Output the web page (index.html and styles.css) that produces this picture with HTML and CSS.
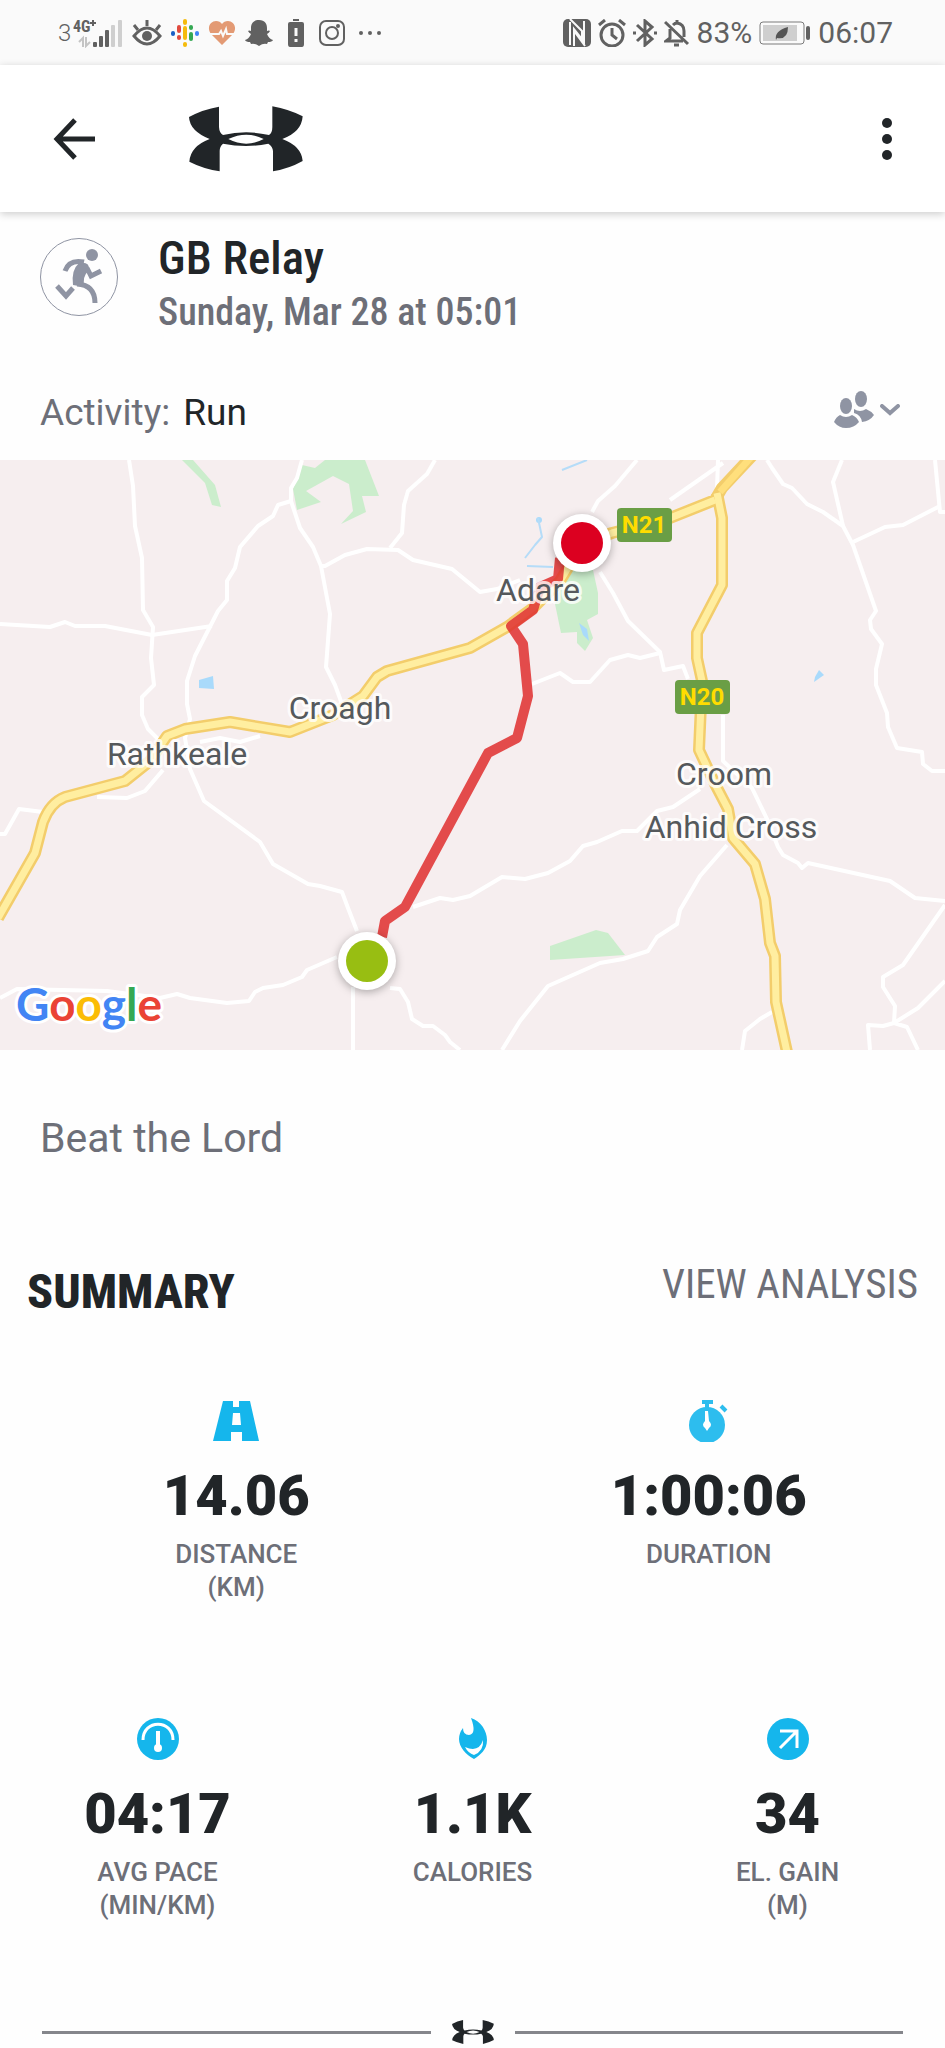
FILE: index.html
```
<!DOCTYPE html>
<html lang="en">
  <head>
    <meta charset="UTF-8" />
    <meta name="viewport" content="width=device-width, initial-scale=1" />
    <title>GB Relay</title>
    <link rel="stylesheet" href="styles.css">
  </head>
  <body>
    <!-- Shared logo shape -->
    <svg class="defs" width="0" height="0" aria-hidden="true">
      <symbol id="logo" viewBox="568 318 342 196">
        <path fill-rule="evenodd" d="M568 350Q610 327 658 319V380Q659 398 670 404Q740 388 808 404Q818 398 818 380V318Q868 327 909 348Q906 395 848 416Q906 438 909 482Q868 505 820 513V452Q819 438 806 430Q740 444 670 430Q660 438 660 452V513Q610 505 569 484Q572 438 630 416Q570 392 568 350ZM686 416Q740 390 792 416Q740 444 686 416Z" />
      </symbol>
    </svg>

    <!-- Phone status bar -->
    <div class="status-bar">
      <div class="status-left">
        <span class="sim">3</span>
        <svg width="50" height="30" viewBox="0 0 50 30">
          <text class="network" x="0" y="14">4G</text>
          <path d="M17 5h6M20 2v6" stroke="#616161" stroke-width="2" />
          <path d="M6 24l4-4v9M13 19v9l4-4" fill="none" stroke="#c4c4c4" stroke-width="2" />
          <g fill="#616161">
            <rect x="20" y="24" width="4" height="5" rx="1" />
            <rect x="26" y="18" width="4" height="11" rx="1" />
            <rect x="32" y="12" width="4" height="17" rx="1" />
          </g>
          <g fill="#cfcfcf">
            <rect x="38" y="7" width="4" height="22" rx="1" />
            <rect x="45" y="2" width="4" height="27" rx="1" />
          </g>
        </svg>
        <svg width="30" height="28" viewBox="0 0 30 28">
          <path d="M2 17Q15 1 28 17Q15 33 2 17Z" fill="none" stroke="#616161" stroke-width="3" />
          <circle cx="15" cy="17" r="5" fill="#616161" />
          <path d="M2 6l4 5M15 1v6M28 6l-4 5" stroke="#616161" stroke-width="3" />
        </svg>
        <svg width="28" height="28" viewBox="0 0 28 28" stroke-width="4" stroke-linecap="round">
          <path d="M2 14v1" stroke="#1a5fc4" />
          <path d="M8 8v4M8 18v1" stroke="#e04a3f" />
          <path d="M14 2v2M14 9v10M14 25v1" stroke="#f5bb0c" />
          <path d="M20 8v1M20 15v5" stroke="#34a853" />
          <path d="M26 14v1" stroke="#4285f4" />
        </svg>
        <svg width="28" height="26" viewBox="0 0 28 26">
          <path d="M14 25L3 14C-2 7 3 1 8 1q4 0 6 3 2-3 6-3c5 0 10 6 5 13Z" fill="#e39a74" />
          <path d="M1 14h10l2-3 2 5 3-7 1 5h8" fill="none" stroke="#fafafa" stroke-width="2" />
        </svg>
        <svg width="28" height="26" viewBox="0 0 28 26">
          <path d="M14 0c6 0 8 4 8 8v3q2-1 3 0-1 2-3 3 2 5 6 6-1 2-5 2l-1 2q-4-1-8 2-4-3-8-2l-1-2q-4 0-5-2 4-1 6-6-2-1-3-3 1-1 3 0V8c0-4 2-8 8-8Z" fill="#616161" />
        </svg>
        <svg class="cell" width="16" height="28" viewBox="0 0 16 28">
          <path d="M5 0h6v2H5ZM2 3h12q2 0 2 2v20q0 3-2 3H2q-2 0-2-3V5q0-2 2-2Z" fill="#616161" />
          <path d="M8 9v8M8 20v3" stroke="#fafafa" stroke-width="3" />
        </svg>
        <svg width="26" height="26" viewBox="0 0 26 26" fill="none" stroke="#616161" stroke-width="2">
          <rect x="1" y="1" width="24" height="24" rx="6" />
          <circle cx="13" cy="13" r="6" />
          <circle cx="19" cy="6" r="1" />
        </svg>
        <svg class="more" width="24" height="6" viewBox="0 0 24 6" fill="#616161">
          <circle cx="3" cy="3" r="2" /><circle cx="12" cy="3" r="2" /><circle cx="21" cy="3" r="2" />
        </svg>
      </div>
      <div class="status-right">
        <svg width="28" height="28" viewBox="0 0 28 28">
          <rect width="28" height="28" rx="5" fill="#616161" />
          <path d="M7 3v23M21 2v23" stroke="#fafafa" stroke-width="2" />
          <path d="M7 0L19 12V20L11 10V27M11 12L22 27" fill="none" stroke="#fafafa" stroke-width="2" />
        </svg>
        <svg width="28" height="28" viewBox="0 0 28 28" fill="none" stroke="#616161" stroke-width="3">
          <circle cx="14" cy="16" r="11" />
          <path d="M14 9v7l5 4M1 6l6-5M27 6l-6-5" />
        </svg>
        <svg width="24" height="28" viewBox="0 0 24 28" fill="none" stroke="#616161" stroke-width="3">
          <path d="M4 6l15 14-7 6V2l7 6L4 22M0 14h3M21 14h3" />
        </svg>
        <svg width="26" height="28" viewBox="0 0 26 28" fill="none" stroke="#616161" stroke-width="3">
          <path d="M1 3l23 22M6 10v9l-4 3h17M9 6q2-2 4-2 7 1 7 8v6M13 1v3" />
          <path d="M10 26h5" />
        </svg>
        <span class="clock">83%</span>
        <svg width="52" height="24" viewBox="0 0 52 24">
          <rect x="1" y="1" width="44" height="22" rx="3" fill="none" stroke="#7a7a7a" />
          <rect x="4" y="4" width="34" height="16" fill="#cfcfcf" />
          <path d="M17 19q-2-9 12-13 0 13-11 11Z" fill="#555" />
          <rect x="47" y="5" width="4" height="14" rx="2" fill="#616161" />
        </svg>
        <span class="clock">06:07</span>
      </div>
    </div>

    <header class="app-bar">
      <button class="icon-btn" aria-label="Back">
        <svg width="42" height="42" viewBox="0 0 42 42" fill="none" stroke="#212528" stroke-width="5">
          <path d="M42 21H4M22 2L4 21l18 19" />
        </svg>
      </button>
      <svg class="brand" width="114" height="66" role="img" aria-label="Under Armour"><use href="#logo" /></svg>
      <button class="icon-btn menu-btn" aria-label="More options">
        <svg width="12" height="44" viewBox="0 0 12 44" fill="#212528">
          <circle cx="6" cy="6" r="5" /><circle cx="6" cy="22" r="5" /><circle cx="6" cy="38" r="5" />
        </svg>
      </button>
    </header>

    <main>
      <section class="workout">
        <div class="avatar">
          <svg width="48" height="56" viewBox="0 0 48 56" fill="none" stroke="#8f94a3" stroke-width="5">
            <circle cx="37" cy="6" r="6" fill="#8f94a3" stroke="none" />
            <path d="M18 36Q16 21 24 14q11-2 10 7-8 8-4 17Z" fill="#8f94a3" stroke="none" />
            <path d="M29 13Q14 10 10 22M32 19l4 8 10-5M22 35q18 1 18 19" />
            <path d="M2 37l9 10 7-8" />
          </svg>
        </div>
        <div>
          <h1>GB Relay</h1>
          <p class="date">Sunday, Mar 28 at 05:01</p>
        </div>
      </section>

      <div class="activity">
        <p>Activity: <span>Run</span></p>
        <button class="icon-btn privacy" aria-label="Who can see this">
          <svg width="40" height="38" viewBox="0 0 40 38" fill="#8f94a3">
            <ellipse cx="27" cy="8" rx="6" ry="8" />
            <path d="M20 18q6 4 12 0 5 2 8 6-4 6-12 7-1-7-8-9Z" />
            <ellipse cx="12" cy="15" rx="6" ry="8" />
            <path d="M6 24q6 4 12 0 5 2 7 7-5 6-13 6-7 0-12-6 2-5 6-7Z" />
          </svg>
          <svg width="20" height="12" viewBox="0 0 20 12" fill="none" stroke="#8f94a3" stroke-width="4" stroke-linecap="round">
            <path d="M2 2l8 7 8-7" />
          </svg>
        </button>
      </div>

      <svg class="map" viewBox="0 0 945 590" role="img" aria-label="Route map">
        <rect width="945" height="590" fill="#f6eeef" />
        <!-- parks -->
        <g fill="#cbedcc">
          <path d="M182 0H193L215 25 221 47 212 45 205 23Z" />
          <path d="M302 5L315 8 325 0H365L379 36H362L366 52 341 64 353 51 349 24 333 16 306 31 321 42 297 50 293 29Z" />
          <path d="M567 110H593L598 133V154L587 160 593 178 585 191 577 183V172L561 173 555 144Z" />
          <path d="M550 486L596 470 608 473 625 495 550 500Z" />
        </g>
        <!-- water -->
        <g fill="#a9dafb">
          <path d="M199 220L213 216 214 229 199 228Z" />
          <path d="M815 217L819 210 824 215 814 222Z" />
          <path d="M579 163L587 169 589 181 583 175Z" />
          <circle cx="539" cy="60" r="3" />
        </g>
        <path class="stream" d="M562 10L587 0M538 58L542 77 535 85 525 98M527 106L553 107" />
        <!-- small roads -->
        <g class="road">
          <path d="M129 0L133 26 135 66 142 98 143 150 153 167 151 198 154 225 142 237V255L148 269 158 279" />
          <path d="M0 164L50 167 65 162 75 166H105L152 175 212 166" />
          <path d="M302 0L297 18 291 28V41L278 45 273 56 258 66 240 87 235 108 227 121V140L218 151 195 196 187 221V244L190 259 185 278 190 309 204 341 260 382 273 404 308 424 320 426 342 432 348 448 357 471" />
          <path d="M291 41L300 68 313 87 321 106 330 154 326 207 335 225 342 244" />
          <path d="M321 106H325L345 95 367 89 398 90 413 100 452 109 480 132 497 129 520 120" />
          <path d="M435 0L427 14 408 31 404 45 402 73 390 88" />
          <path d="M0 374H5L19 349 43 352M97 337L127 338 145 331 163 310M200 282L220 278 240 282 260 276" />
          <path d="M0 538L17 529 107 531 160 538 177 534 190 538 227 543 249 541 255 532 263 528 283 525 302 517 307 510 337 497" />
          <path d="M353 527V590M390 528L400 529 408 542 412 559 423 566H433L445 575 450 582 460 590" />
          <path d="M413 447L440 438 453 440 470 436 502 417 525 419 548 413 570 401 583 386 597 382 622 371H637L657 351 673 347 700 329" />
          <path d="M637 0L615 26 598 41 592 52M723 3L670 40M718 0L717 29" />
          <path d="M600 112L613 133 628 161 660 192 664 210 683 206 688 219" />
          <path d="M532 224L560 213 573 222H590L610 200 628 195 640 198 660 193" />
          <path d="M723 255V301L752 328 767 359 778 387 783 395 798 403 802 408 808 403 890 421 915 438 945 441" />
          <path d="M727 385L700 416 680 450 677 464 657 477 648 491 623 499 600 503 548 526 520 561 502 590" />
          <path d="M767 0L772 8 783 24 792 28 807 44 823 52 843 66 853 85 876 151 870 160 871 169 882 184 876 209V225L887 253 888 267 897 288 922 292 923 304 932 311H945" />
          <path d="M842 0L833 22 843 66M853 82L885 67 903 65 940 46M935 0L940 52H945" />
          <path d="M945 445L903 505 883 517V527L895 546 894 563 883 566 868 565 870 590M894 563L907 567 918 590M894 563L918 548 945 521" />
          <path d="M772 552L760 559 745 571 742 590" />
        </g>
        <!-- national roads: casing, then fill -->
        <g class="casing">
          <path d="M-2 458L35 393 43 362Q50 343 65 337L125 321 150 301 167 276 185 269 230 262 290 272 333 255 363 236 377 217 387 211 470 188 507 167 533 148 560 121 583 83 612 73 670 58 715 40 722 28 752 -4" />
          <path d="M717 33L722 58V125L697 173V198L702 221 699 290 715 324 728 349 733 378 755 404 765 439 770 483 775 496 776 542 787 592" />
        </g>
        <g class="main-road">
          <path d="M-2 458L35 393 43 362Q50 343 65 337L125 321 150 301 167 276 185 269 230 262 290 272 333 255 363 236 377 217 387 211 470 188 507 167 533 148 560 121 583 83 612 73 670 58 715 40" />
          <path d="M717 33L722 58V125L697 173V198L702 221 699 290 715 324 728 349 733 378 755 404 765 439 770 483 775 496 776 542 787 592" />
          <path class="trunk" d="M720 32L752 -4" />
        </g>
        <path class="route" d="M382 477L385 461 405 447 488 293 517 278 528 236 523 184 511 166 533 150 540 127 558 119 560 98" />
        <!-- start and finish -->
        <g class="marker">
          <circle cx="367" cy="501" r="29" />
          <circle cx="582" cy="83" r="29" />
        </g>
        <circle cx="367" cy="501" r="21" fill="#98be12" />
        <circle cx="582" cy="83" r="21" fill="#dc0020" />
        <g class="badge">
          <rect x="617" y="48" width="55" height="34" rx="4" />
          <rect x="675" y="220" width="55" height="34" rx="4" />
          <text x="644" y="73">N21</text>
          <text x="702" y="245">N20</text>
        </g>
        <g class="town">
          <text x="538" y="141">Adare</text>
          <text x="340" y="259">Croagh</text>
          <text x="177" y="305">Rathkeale</text>
          <text x="724" y="325">Croom</text>
          <text x="731" y="378">Anhid Cross</text>
        </g>
        <text class="google" x="16" y="561"><tspan fill="#4285f4">G</tspan><tspan fill="#ea4335">o</tspan><tspan fill="#fbbc05">o</tspan><tspan fill="#4285f4">g</tspan><tspan fill="#34a853">l</tspan><tspan fill="#ea4335">e</tspan></text>
      </svg>

      <p class="note">Beat the Lord</p>

      <div class="summary-head">
        <h2>SUMMARY</h2>
        <a href="#analysis">VIEW ANALYSIS</a>
      </div>

      <div class="stats two">
        <div class="stat">
          <svg width="46" height="42" viewBox="0 0 46 42">
            <path fill="#15b6ec" fill-rule="evenodd" d="M10 1H20V7H26V1H37L46 41H29V32H18V41H0ZM20 13L19 25H28L27 13Z" />
          </svg>
          <p class="value">14.06</p>
          <p class="label">DISTANCE<br>(KM)</p>
        </div>
        <div class="stat">
          <svg width="42" height="42" viewBox="0 0 42 42">
            <circle cx="19" cy="25" r="18" fill="#2dbdee" />
            <path d="M14 2h11M19 2v7M33 6l5 5" stroke="#2dbdee" stroke-width="4" />
            <path d="M17 11h3l1 10q4 4 0 7l-2 3-2-3q-4-3 0-7Z" fill="#fff" />
          </svg>
          <p class="value">1:00:06</p>
          <p class="label">DURATION</p>
        </div>
      </div>

      <div class="stats three">
        <div class="stat">
          <svg width="42" height="42" viewBox="0 0 42 42">
            <circle cx="21" cy="21" r="21" fill="#15b6ec" />
            <path d="M6 22C6 1 36 1 36 22" fill="none" stroke="#fff" stroke-width="3" />
            <path d="M21 13v16" stroke="#fff" stroke-width="4" />
            <circle cx="21" cy="30" r="4" fill="#fff" />
          </svg>
          <p class="value">04:17</p>
          <p class="label">AVG PACE<br>(MIN/KM)</p>
        </div>
        <div class="stat">
          <svg width="28" height="42" viewBox="0 0 28 42">
            <path d="M12 0C22 3 28 13 28 22 28 32 21 37 15 41 7 37 0 29 0 21Q0 15 4 10 4 17 10 17 18 16 12 0Z" fill="#15b6ec" />
            <path d="M6 29Q20 35 24 22 25 33 15 37 9 35 6 29Z" fill="#fff" />
          </svg>
          <p class="value">1.1K</p>
          <p class="label">CALORIES</p>
        </div>
        <div class="stat">
          <svg width="42" height="42" viewBox="0 0 42 42">
            <circle cx="21" cy="21" r="21" fill="#15b6ec" />
            <path d="M13 30L30 13M13 13H30V30" fill="none" stroke="#fff" stroke-width="3" />
          </svg>
          <p class="value">34</p>
          <p class="label">EL. GAIN<br>(M)</p>
        </div>
      </div>

      <div class="divider">
        <svg width="42" height="24" aria-hidden="true"><use href="#logo" /></svg>
      </div>
    </main>
  </body>
</html>
```
FILE: styles.css
```
* {
  margin: 0;
  padding: 0;
  box-sizing: border-box;
}
body {
  background: #fefefe;
  color: #212528;
  font-family: Roboto, "Liberation Sans", sans-serif;
}
svg {
  display: block;
  flex-shrink: 0;
}
.defs {
  position: absolute;
}

/* Status bar */
.status-bar {
  display: flex;
  justify-content: space-between;
  align-items: center;
  height: 65px;
  padding: 0 52px 0 58px;
  background: #fafafa;
  color: #616161;
}
.status-left,
.status-right {
  display: flex;
  align-items: center;
  gap: 9px;
}
.status-right {
  gap: 7px;
}
.sim {
  font-size: 24px;
  font-weight: 300;
  margin-right: -7px;
}
.network {
  font-size: 16px;
  font-weight: 700;
  font-family: "Roboto Condensed", "Liberation Sans Narrow", sans-serif;
  fill: #616161;
}
.cell {
  margin: 0 6px;
}
.more {
  margin-left: 4px;
}
.clock {
  font-size: 30px;
}

/* App bar */
.app-bar {
  display: flex;
  align-items: center;
  height: 147px;
  padding: 0 52px 0 53px;
  background: #fff;
  box-shadow: 0 2px 8px rgba(0, 0, 0, 0.2);
}
.icon-btn {
  display: flex;
  align-items: center;
  border: 0;
  background: none;
  cursor: pointer;
}
.brand {
  margin-left: 94px;
}
.menu-btn {
  margin-left: auto;
}
.brand,
.divider svg {
  fill: #212528;
}

/* Workout title */
.workout {
  display: flex;
  gap: 40px;
  padding: 20px 40px 0;
}
.avatar {
  display: flex;
  align-items: center;
  justify-content: center;
  width: 78px;
  height: 78px;
  margin-top: 6px;
  border: 1px solid #8f94a3;
  border-radius: 50%;
}
h1 {
  font-family: "Roboto Condensed", "Liberation Sans Narrow", Roboto, sans-serif;
  font-size: 47px;
  font-weight: 500;
  line-height: 52px;
}
.date {
  font-family: "Roboto Condensed", "Liberation Sans Narrow", Roboto, sans-serif;
  font-size: 38px;
  font-weight: 500;
  line-height: 56px;
  color: #6d6f78;
}
.activity {
  display: flex;
  justify-content: space-between;
  align-items: center;
  height: 100px;
  margin-top: 20px;
  padding: 0 45px 0 40px;
  font-size: 37px;
  color: #6d6f78;
}
.activity p {
  padding-top: 4px;
}
.activity span {
  margin-left: 4px;
  color: #212528;
}
.privacy {
  gap: 6px;
}

/* Map */
.map {
  width: 100%;
  height: auto;
}
.map path {
  stroke-linejoin: round;
}
.road,
.casing,
.main-road,
.route,
.stream {
  fill: none;
}
.road {
  stroke: #fff;
  stroke-width: 4;
}
.stream {
  stroke: #b5dcf8;
  stroke-width: 2;
}
.casing {
  stroke: #f3cd6b;
  stroke-width: 12;
}
.main-road {
  stroke: #ffeea0;
  stroke-width: 7;
}
.trunk {
  stroke: #ffdf7c;
}
.route {
  stroke: #e03030;
  stroke-opacity: 0.86;
  stroke-width: 10;
}
.marker {
  fill: #fff;
  filter: drop-shadow(0 2px 4px rgba(0, 0, 0, 0.3));
}
.badge rect {
  fill: #6a9e45;
}
.badge text {
  font-size: 24px;
  font-weight: 700;
  fill: #ffdc00;
  text-anchor: middle;
}
.town {
  font-size: 32px;
  fill: #55595c;
  stroke: rgba(255, 255, 255, 0.8);
  stroke-width: 6;
  stroke-linejoin: round;
  paint-order: stroke;
  text-anchor: middle;
}
.google {
  font-family: Lato, sans-serif;
  font-size: 46px;
  font-weight: 700;
  stroke: #fff;
  stroke-width: 6;
  stroke-linejoin: round;
  paint-order: stroke;
}

/* Summary */
.note {
  padding: 60px 40px 0;
  font-size: 41px;
  line-height: 56px;
  color: #6d6f78;
}
.summary-head {
  display: flex;
  justify-content: space-between;
  align-items: flex-start;
  margin-top: 90px;
  padding: 0 27px;
}
.summary-head h2,
.summary-head a {
  font-family: "Roboto Condensed", "Liberation Sans Narrow", Roboto, sans-serif;
  line-height: 56px;
}
.summary-head h2 {
  margin-top: 8px;
  font-size: 48px;
  font-weight: 800;
}
.summary-head a {
  font-size: 41px;
  color: #6d6f78;
  text-decoration: none;
}
.stats {
  display: grid;
}
.two {
  grid-template-columns: repeat(2, 1fr);
  min-height: 318px;
  margin-top: 80px;
}
.three {
  grid-template-columns: repeat(3, 1fr);
  min-height: 302px;
}
.stat {
  display: flex;
  flex-direction: column;
  align-items: center;
  text-align: center;
}
.value {
  margin-top: 20px;
  font-size: 56px;
  font-weight: 900;
  line-height: 68px;
}
.label {
  margin-top: 8px;
  font-size: 26px;
  font-weight: 500;
  line-height: 33px;
  color: #6d6f78;
}
.divider {
  display: flex;
  align-items: center;
  gap: 21px;
  padding: 0 42px;
}
.divider::before,
.divider::after {
  content: "";
  flex: 1;
  height: 3px;
  background: #85868b;
}
```
